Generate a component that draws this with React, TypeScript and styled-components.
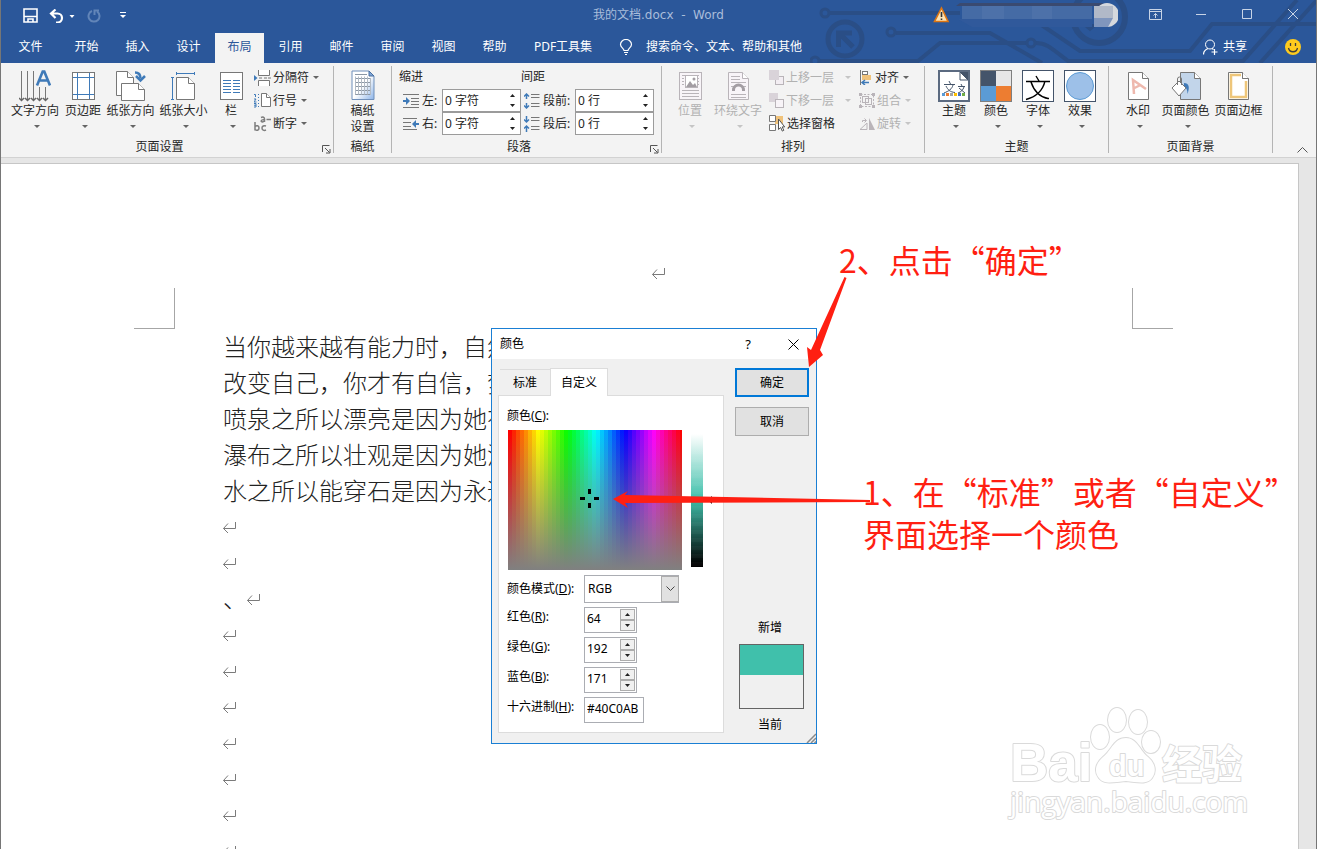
import React from "react";
import styled, { createGlobalStyle, css } from "styled-components";

const ui = `"Noto Sans", "Noto Sans CJK SC", sans-serif`;
const blue = "#2b579a";
const stroke = "#777";
const accent = "#3f7ab8";

const Global = createGlobalStyle`
  * { box-sizing: border-box; }
  body { margin: 0; font: 12px/16px ${ui}; color: #262626; background: #fff; }
  button { font: inherit; color: inherit; background: none; border: 0; padding: 0; cursor: default; }
  input, select { font: inherit; color: inherit; }
  p { margin: 0; }
  svg { display: block; flex: none; }
`;

const Window = styled.div`
  position: relative;
  display: flex;
  flex-direction: column;
  height: 100vh;
  overflow: hidden;
  border: solid #767676;
  border-width: 0 1px;
`;

/* ---------- header ---------- */
const Header = styled.header`
  position: relative;
  background: ${blue};
  color: #fff;
`;
const Circuit = styled.svg`
  position: absolute;
  top: 0;
  right: 0;
`;
const TitleBar = styled.div`
  position: relative;
  display: grid;
  grid-template-columns: 1fr auto 1fr;
  align-items: center;
  height: 33px;
`;
const QuickAccess = styled.div`
  display: flex;
  align-items: center;
  gap: 9px;
  padding: 0 0 2px 20px;
`;
const Title = styled.div`
  color: #a9bdda;
  white-space: pre;
  padding-bottom: 4px;
  font-family: "DejaVu Sans", "Noto Sans CJK SC", sans-serif;
`;
const WindowTools = styled.div`
  display: flex;
  justify-content: flex-end;
  align-items: center;
  padding-bottom: 5px;
`;
const ToolButton = styled.button<{ $w?: number }>`
  display: grid;
  place-items: center;
  width: ${(p) => p.$w ?? 46}px;
  height: 28px;
`;
const Account = styled.svg`
  margin-right: 14px;
`;
const TabRow = styled.nav`
  position: relative;
  display: flex;
  height: 30px;
`;
const RibbonTab = styled.button<{ $active?: boolean; $wide?: number }>`
  width: ${(p) => p.$wide ?? 49}px;
  margin-right: 2px;
  padding-bottom: 3px;
  color: ${(p) => (p.$active ? blue : "#fff")};
  background: ${(p) => (p.$active ? "#f3f3f3" : "transparent")};
  white-space: nowrap;
`;
const TellMe = styled.button`
  display: flex;
  align-items: center;
  gap: 13px;
  margin-left: 12px;
  padding-bottom: 3px;
`;
const Share = styled.button`
  display: flex;
  align-items: center;
  gap: 4px;
  margin: 0 38px 0 auto;
  padding-bottom: 3px;
`;
const Smile = styled.button`
  margin-right: 15px;
  padding-bottom: 2px;
`;

/* ---------- ribbon ---------- */
const Ribbon = styled.div`
  display: flex;
  height: 95px;
  padding: 3px 0 4px;
  background: #f3f3f3;
  border-bottom: 1px solid #d2d2d2;
`;
const Group = styled.section<{ $w: number }>`
  display: flex;
  flex-direction: column;
  width: ${(p) => p.$w}px;
  flex: none;
  border-right: 1px solid #b4b4b4;
`;
const GroupBody = styled.div<{ $pad?: number; $center?: boolean }>`
  display: flex;
  flex: 1;
  padding-left: ${(p) => p.$pad ?? 7}px;
  justify-content: ${(p) => (p.$center ? "center" : "flex-start")};
`;
const GroupFoot = styled.div`
  display: flex;
  gap: 4px;
  height: 16px;
  padding-top: 4px;
  align-items: center;
`;
const GroupName = styled.div`
  flex: 1;
  text-align: center;
`;
const Launcher = styled.button`
  width: 11px;
  padding-top: 5px;
`;
const Big = styled.button<{ $w: number }>`
  display: flex;
  flex-direction: column;
  align-items: center;
  width: ${(p) => p.$w}px;
  padding-top: 2px;
  white-space: nowrap;
  &:disabled { color: #b1b1b1; }
`;
const BigIcon = styled.span`
  display: grid;
  place-items: center;
  height: 35px;
`;
const CaretMark = styled.span<{ $big?: boolean }>`
  width: 0;
  height: 0;
  border: 3px solid transparent;
  border-top-color: currentColor;
  border-bottom: 0;
  opacity: 0.7;
  margin: ${(p) => (p.$big ? "6px 0 0 4px" : "0")};
`;
const SmallColumn = styled.div<{ $w: number; $ml?: number }>`
  display: flex;
  flex-direction: column;
  width: ${(p) => p.$w}px;
  margin-left: ${(p) => p.$ml ?? 0}px;
`;
const Small = styled.button<{ $spread?: boolean }>`
  display: flex;
  align-items: center;
  height: 23px;
  gap: 2px;
  white-space: nowrap;
  & > ${CaretMark} { margin-left: ${(p) => (p.$spread ? 9 : 2)}px; }
  &:disabled { color: #b1b1b1; }
`;
const FieldColumn = styled.div<{ $w: number; $pad: number }>`
  width: ${(p) => p.$w}px;
  & > div { padding-left: ${(p) => p.$pad}px; }
`;
const FieldTitle = styled.p`
  height: 23px;
  line-height: 22px;
`;
const FieldRow = styled.div`
  display: flex;
  align-items: center;
  gap: 3px;
  height: 23px;
`;
const Spin = styled.span`
  display: flex;
  width: 79px;
  height: 23px;
  margin-left: auto;
  background: #fff;
  border: 1px solid #9b9b9b;
`;
const SpinInput = styled.input`
  flex: 1;
  min-width: 0;
  border: 0;
  padding: 0 0 0 2px;
  background: none;
  outline: 0;
`;
const SpinButtons = styled.span`
  display: flex;
  flex-direction: column;
  width: 15px;
`;
const SpinButton = styled.button`
  display: grid;
  place-items: center;
  flex: 1;
`;
const Collapse = styled.button`
  align-self: flex-end;
  margin: 0 8px 0 auto;
`;

/* ---------- document ---------- */
const Canvas = styled.main`
  flex: 1;
  min-height: 0;
  padding: 5px 17px 0 0;
  background: #e6e6e6;
`;
const Page = styled.article`
  height: 100%;
  overflow: hidden;
  background: #fff;
  border: solid #c6c6c6;
  border-width: 1px 1px 0 0;
  padding: 104px 125px 0 133px;
`;
const PageHead = styled.div`
  display: flex;
  justify-content: space-between;
  align-items: flex-end;
  height: 61px;
`;
const HeadMark = styled.div`
  align-self: flex-start;
  margin-left: 10px;
`;
const Corner = styled.div<{ $right?: boolean }>`
  width: 41px;
  height: 41px;
  border-bottom: 1px solid #a6a6a6;
  ${(p) => (p.$right ? css`border-left: 1px solid #a6a6a6;` : css`border-right: 1px solid #a6a6a6;`)}
`;
const Prose = styled.div`
  padding-left: 89px;
  color: #222;
  font: 300 24px/34px "Noto Sans CJK SC", sans-serif;
`;
const Line = styled.p`
  display: flex;
  height: 36px;
  white-space: nowrap;
  & > svg { margin-top: 13px; }
`;

/* ---------- dialog ---------- */
const Dialog = styled.div`
  position: absolute;
  left: 490px;
  top: 328px;
  width: 326px;
  height: 416px;
  display: flex;
  flex-direction: column;
  border: 1px solid #1a7fd4;
  background: #f0f0f0;
  color: #000;
`;
const DialogTitle = styled.div`
  display: flex;
  align-items: center;
  height: 30px;
  padding: 0 17px 0 8px;
  background: #fff;
`;
const DialogTool = styled.button<{ $gap?: number }>`
  margin-left: ${(p) => (p.$gap ? `${p.$gap}px` : "auto")};
  font-size: 13px;
`;
const DialogBody = styled.div`
  display: flex;
  flex: 1;
  padding: 9px 7px 10px 6px;
  gap: 11px;
`;
const Left = styled.div`
  display: flex;
  flex-direction: column;
  width: 226px;
`;
const DialogTabs = styled.div`
  display: flex;
  align-items: flex-end;
  padding-left: 2px;
`;
const DialogTab = styled.button<{ $active?: boolean }>`
  position: relative;
  width: ${(p) => (p.$active ? 58 : 50)}px;
  height: ${(p) => (p.$active ? 28 : 26)}px;
  margin-bottom: ${(p) => (p.$active ? -1 : 0)}px;
  border: 1px solid #dcdcdc;
  border-bottom: 0;
  border-left-width: ${(p) => (p.$active ? 1 : 0)}px;
  border-right-width: ${(p) => (p.$active ? 1 : 0)}px;
  background: ${(p) => (p.$active ? "#fff" : "#f0f0f0")};
`;
const Panel = styled.div`
  flex: 1;
  border: 1px solid #dcdcdc;
  background: #fff;
  padding: 12px 0 0 8px;
`;
const PickerRow = styled.div`
  display: flex;
  gap: 9px;
  margin: 6px 0 5px 1px;
`;
const Field = styled.div`
  position: relative;
  width: 174px;
  height: 140px;
`;
const Luma = styled.div`
  width: 12px;
  height: 137px;
  background: repeating-linear-gradient(transparent 0 4px, rgba(255, 255, 255, 0.03) 4px 8px),
    linear-gradient(#fff 3%, #40c0ab 50%, #000 98%);
`;
const LumaMark = styled.span`
  align-self: center;
  margin-left: -4px;
  border: 4px solid transparent;
  border-left: 0;
  border-right-color: #000;
`;
const FormRow = styled.div<{ $h?: number }>`
  display: flex;
  height: ${(p) => p.$h ?? 30}px;
`;
const FormLabel = styled.label<{ $low?: boolean }>`
  width: 77px;
  line-height: ${(p) => (p.$low ? 28 : 20)}px;
  white-space: nowrap;
`;
const SelectWrap = styled.span`
  display: flex;
  position: relative;
  width: 95px;
  height: 28px;
`;
const Select = styled.select`
  appearance: none;
  width: 100%;
  padding: 0 3px;
  border: 1px solid #abadb3;
  border-radius: 0;
  background: #fff;
`;
const SelectArrow = styled.span`
  position: absolute;
  top: 1px;
  right: 0;
  bottom: 1px;
  width: 18px;
  display: grid;
  place-items: center;
  border: 1px solid #adadad;
  background: #e1e1e1;
  pointer-events: none;
`;
const NumberBox = styled.span<{ $w?: number }>`
  display: flex;
  width: ${(p) => p.$w ?? 53}px;
  height: 26px;
  padding: 1px;
  border: 1px solid #abadb3;
  background: #fff;
  & > input { padding: 0 0 2px 1px; }
`;
const Stepper = styled.span`
  display: flex;
  flex-direction: column;
  width: 15px;
`;
const Step = styled.button`
  flex: 1;
  display: grid;
  place-items: center;
  border: 1px solid #adadad;
  background: #f0f0f0;
`;
const Right = styled.div`
  display: flex;
  flex-direction: column;
  width: 74px;
`;
const Push = styled.button<{ $main?: boolean }>`
  height: 29px;
  margin-bottom: 10px;
  border: ${(p) => (p.$main ? "2px solid #0078d7" : "1px solid #adadad")};
  background: #e1e1e1;
`;
const Preview = styled.div`
  display: flex;
  flex-direction: column;
  align-items: center;
  gap: 8px;
  margin-top: auto;
  padding-right: 4px;
`;
const Swatch = styled.div`
  width: 65px;
  height: 65px;
  margin-left: 3px;
  border: 1px solid #646464;
  background: linear-gradient(#40c0ab 30px, #f0f0f0 30px);
`;
const Grip = styled.svg`
  position: absolute;
  right: 0;
  bottom: 0;
`;

/* ---------- annotations ---------- */
const Note = styled.p<{ $x: number; $y: number }>`
  position: absolute;
  left: ${(p) => p.$x}px;
  top: ${(p) => p.$y}px;
  color: #ff1f12;
  font: 32px/42px "Noto Sans CJK SC", sans-serif;
  white-space: nowrap;
`;
const Arrows = styled.svg`
  position: absolute;
  left: 600px;
  top: 270px;
  pointer-events: none;
`;
const Watermark = styled.svg`
  position: absolute;
  right: 60px;
  bottom: 19px;
`;

/* ---------- drawings ---------- */
type IcoProps = { w: number; h: number; children: React.ReactNode };
const Ico = ({ w, h, children }: IcoProps) => (
  <svg width={w} height={h} viewBox={`0 0 ${w} ${h}`} fill="none" aria-hidden="true">
    {children}
  </svg>
);

const Sheet = ({ x = 0, y = 0, w = 20, h = 28, c = stroke, fill = "#fff", fold = 6 }) => (
  <>
    <path d={`M${x + 0.5} ${y + 0.5}h${w - fold - 1}l${fold} ${fold}v${h - fold - 1}h${-(w - 1)}z`} fill={fill} stroke={c} />
    <path d={`M${x + w - fold - 0.5} ${y + 0.5}v${fold}h${fold}`} fill="#fff" stroke={c} />
  </>
);

const TextDirection = () => (
  <Ico w={32} h={32}>
    <path d="M2.500 1v29M8.500 1v29M14.500 1v29M20.500 17v13M26.500 17v13" stroke={stroke} />
    <path d="M0 28l2.500 2.500L5 28M6 28l2.500 2.500L11 28M12 28l2.500 2.500L17 28M18 28l2.500 2.500L23 28M24 28l2.500 2.500L29 28" stroke="#666" strokeWidth="1.500" />
    <path d="M18 15.500L23.700 1.500h1.600L31 15.500M20 10.500h9" stroke={accent} strokeWidth="2.600" />
  </Ico>
);
const Margins = () => (
  <Ico w={23} h={28}>
    <rect x=".5" y=".5" width="22" height="27" fill="#fff" stroke={stroke} />
    <path d="M5.500 1v26M17.500 1v26M1 5.500h21M1 22.500h21" stroke={accent} />
  </Ico>
);
const Orientation = () => (
  <Ico w={30} h={30}>
    <Sheet w={18} h={25} />
    <Sheet x={5} y={12} w={24} h={18} />
    <path d="M19 1.500c4 0 5.500 2 5.500 6" stroke={accent} strokeWidth="2.500" />
    <path d="M20 5l4.500 4.500L29 5" stroke={accent} strokeWidth="2.500" />
  </Ico>
);
const PaperSize = () => (
  <Ico w={25} h={30}>
    <Sheet x={5} y={6} w={19} h={23} />
    <path d="M5 2.500h19M5.500 1v3M23.500 1v3M1.500 6v22M0 6.500h3M0 28.500h3" stroke={accent} />
  </Ico>
);
const Columns = () => (
  <Ico w={23} h={28}>
    <rect x=".5" y=".5" width="22" height="27" fill="#fff" stroke={stroke} />
    <path d="M3 8.500h8M3 11.500h8M3 14.500h8M3 17.500h8M3 20.500h8M13 8.500h7M13 11.500h7M13 14.500h7M13 17.500h7M13 20.500h7" stroke={accent} />
  </Ico>
);
const Breaks = () => (
  <Ico w={17} h={16}>
    <path d="M4.500 0v5.500h11V0M4.500 16v-5.500h11V16" stroke={stroke} fill="#fff" />
    <path d="M5 8h3M10 8h3M14 8h3" stroke={stroke} />
    <path d="M0 5l3.500 3L0 11z" fill={accent} />
  </Ico>
);
const LineNumbers = () => (
  <Ico w={17} h={15}>
    <path d="M0 1.500h1.500V4M0 6h2l-2 3h2.500M0 10.500h2v3.500H0M0 12.200h2M4.500 1v1M4.500 4v1M4.500 7v1M4.500 10v1M4.500 13v1" stroke={accent} />
    <Sheet x={7} w={10} h={14} fold={4} />
  </Ico>
);
const Hyphen = () => (
  <Ico w={17} h={16}>
    <path d="M1 6v8.500M1 10.500c1.500-1.500 4-1 4 1.500s-2.500 3-4 1.500M12 10c-2-.8-4 0-4 2s2 3 4 2M7 1.500c2-.8 3.500-.5 3.500 1.500v3M10.500 3.700c-4-.5-4 2.300-2 2.300l2-1M12.500 3.500H17" stroke="#7d7d7d" strokeWidth="1.500" />
  </Ico>
);
const Manuscript = () => (
  <Ico w={24} h={31}>
    <defs>
      <linearGradient id="ms" x1="0" y1="0" x2="1" y2="1">
        <stop offset=".5" stopColor="#fff" />
        <stop offset="1" stopColor="#8db4e8" />
      </linearGradient>
    </defs>
    <path d="M1 1h17l5 5v23.500H1z" fill="url(#ms)" stroke="#6f8fba" />
    <path d="M18 1v5h5z" fill="#7ea6d8" stroke="#4a6f9f" />
    <path d="M4 4.500h12M4 8.500h16M4 12.500h16M4 16.500h16M4 20.500h16M4 24.500h16" stroke="#8b97a5" />
    <path d="M4.500 6.500v18M7.500 6.500v18M10.500 6.500v18M13.500 6.500v18M16.500 6.500v18M19.500 8v17" stroke="#b3bbc4" />
  </Ico>
);
const Indent = ({ right }: { right?: boolean }) => (
  <Ico w={16} h={14}>
    {right ? (
      <>
        <path d="M0 1.500h14M0 5.500h8M0 9.500h8M0 12.500h14" stroke={stroke} />
        <path d="M16 7h-5" stroke={accent} strokeWidth="2" />
        <path d="M13 3L9 7l4 4z" fill={accent} />
      </>
    ) : (
      <>
        <path d="M0 .5h16M8 4.500h8M8 7.500h8M8 10.500h8M0 13.500h16" stroke={stroke} />
        <path d="M0 7h4" stroke={accent} strokeWidth="2" />
        <path d="M3 3l4 4-4 4z" fill={accent} />
      </>
    )}
  </Ico>
);
const Spacing = ({ after }: { after?: boolean }) => (
  <Ico w={16} h={16}>
    <path d="M7 1.500h8.500M7 4.500h8.500M7 10.500h8.500M7 13.500h8.500" stroke={stroke} />
    {after ? (
      <path d="M2.500 0v6M0 3.500L2.500 6 5 3.500M2.500 16v-6M0 12.500L2.500 10 5 12.500" stroke={accent} strokeWidth="1.500" />
    ) : (
      <path d="M2.500 1v5M0 3.500L2.500 1 5 3.500M2.500 10v5M0 12.500L2.500 15 5 12.500" stroke={accent} strokeWidth="1.500" />
    )}
  </Ico>
);
const dim = "#b9b4b9";
const Position = () => (
  <Ico w={23} h={28}>
    <rect x=".5" y=".5" width="22" height="27" fill="#f8f4f8" stroke={dim} />
    <path d="M3 3.500h17M3 6.500h2M18 6.500h2M3 9.500h2M18 9.500h2M3 12.500h2M18 12.500h2M3 18.500h17M3 21.500h17M3 24.500h17" stroke={dim} />
    <rect x="6.500" y="3.500" width="12" height="12" fill="#fff" stroke={dim} />
    <path d="M7 15l4-6 3 4 2-2 2 4z" fill="#a39da3" />
    <circle cx="15" cy="7" r="1.500" fill="#a39da3" />
  </Ico>
);
const WrapText = () => (
  <Ico w={21} h={28}>
    <Sheet w={21} h={28} c={dim} fill="#f8f4f8" />
    <path d="M3 4.500h9M3 7.500h9M3 10.500h15M3 22.500h15M3 25.500h15M3 14.500h3M15 14.500h3" stroke={dim} />
    <path d="M5.500 19v-1a5 5 0 0 1 10 0v1" stroke="#a39da3" strokeWidth="3" />
  </Ico>
);
const Layer = ({ down }: { down?: boolean }) => (
  <Ico w={15} h={15}>
    <rect x="6.500" y="6.500" width="8" height="8" fill="#f3eef3" stroke={dim} />
    <rect width={down ? 9 : 10} height={down ? 9 : 10} fill="#d9d3d9" />
    {down && <rect x="6.500" y="6.500" width="8" height="8" fill="#f8f4f8" stroke={dim} />}
  </Ico>
);
const SelectionPane = () => (
  <Ico w={16} h={17}>
    <rect x="6" y="1" width="8" height="8" fill="#f0c27a" />
    <path d="M.5.500h6v6h-6zM.5 9.500h6v6h-6z" fill="#fff" stroke={stroke} />
    <path d="M9.500 4v10.500l2.200-2 1.600 3.600 1.500-.8-1.600-3.400h2.500z" fill="#fff" stroke="#555" />
  </Ico>
);
const Align = () => (
  <Ico w={14} h={15}>
    <path d="M1.500 0v15" stroke={stroke} />
    <rect x="3.500" y="1.500" width="5" height="3" fill="#fff" stroke={stroke} />
    <rect x="3" y="5" width="9" height="5" fill="#f0c27a" />
    <path d="M3 12.500h7M6 10l-3 2.500L6 15" stroke={accent} strokeWidth="1.500" />
  </Ico>
);
const GroupIcon = () => (
  <Ico w={16} h={15}>
    <path d="M1.500 1.500h13v12h-13z" stroke={dim} strokeDasharray="2 1.500" />
    <rect x="3.500" y="3.500" width="6" height="6" stroke={dim} />
    <rect x="6.500" y="5.500" width="6" height="6" stroke={dim} />
    <path d="M0 0h3v3H0zM13 0h3v3h-3zM0 12h3v3H0zM13 12h3v3h-3z" fill={dim} />
  </Ico>
);
const Rotate = () => (
  <Ico w={16} h={12}>
    <path d="M1 11.500h7V5zM3.500 4V2.500H7M5.500.500l2 2-2 2" stroke={dim} />
    <path d="M10 0l6 12h-6z" fill={dim} />
  </Ico>
);
const ThemeIcon = () => (
  <Ico w={32} h={32}>
    <rect x="1" y="1" width="30" height="30" fill="#fff" stroke="#5b6a80" strokeWidth="2" />
    <path d="M22 2h8v8z" fill="#44546a" />
    <path d="M22 2v8h8z" fill="#fff" stroke="#44546a" />
    <path d="M6 14.500h11M11 11l1.500 3M15 15c-1 4-4 6-9 8M8 16c2 4 4 6 9 6.500M20 16.500h7M23 14l1 2M26 17c-1 3-3 5-6 6M21 18l6 5" stroke="#44546a" />
    <path d="M4 23h3v3H4z" fill="#5b9bd5" /><path d="M8 23h3v3H8z" fill="#ed7d31" />
    <path d="M12 23h3v3h-3z" fill="#a5a5a5" /><path d="M16 23h3v3h-3z" fill="#ffc000" />
    <path d="M20 23h3v3h-3z" fill="#4472c4" /><path d="M24 23h3v3h-3z" fill="#70ad47" />
  </Ico>
);
const ColorsIcon = () => (
  <Ico w={32} h={32}>
    <path d="M0 0h16v16H0z" fill="#44546a" /><path d="M16 0h16v16H16z" fill="#e7e6e6" />
    <path d="M0 16h16v16H0z" fill="#5b9bd5" /><path d="M16 16h16v16H16z" fill="#ed7d31" />
    <rect x=".5" y=".5" width="31" height="31" stroke="#7f7f7f" />
  </Ico>
);
const FontsIcon = () => (
  <Ico w={32} h={32}>
    <rect x=".5" y=".5" width="31" height="31" fill="#fff" stroke="#44546a" />
    <path d="M4 11.500h24M14 6l3 5M23 11C21 20 14 27 4 29.500M9 12c3 9 9 15 17 16.500M23 28l4 .5" stroke="#000" strokeWidth="1.400" />
  </Ico>
);
const EffectsIcon = () => (
  <Ico w={32} h={32}>
    <rect x=".5" y=".5" width="31" height="31" fill="#fff" stroke="#44546a" />
    <circle cx="16" cy="16" r="13.500" fill="#9dc0e8" stroke="#5b9bd5" />
  </Ico>
);
const WatermarkIcon = () => (
  <Ico w={21} h={28}>
    <Sheet w={21} h={28} />
    <path d="M6 22L5 8l13 9M5.500 16.500l7-3.500" stroke="#eeb8ad" strokeWidth="2.500" />
  </Ico>
);
const PageColorIcon = () => (
  <Ico w={30} h={28}>
    <Sheet x={9} w={21} h={28} fill="#c2d5ea" />
    <path d="M13 11c5 0 6 4 3.500 11c0-4-1-6-3.500-8z" fill={accent} />
    <path d="M1 16l7-7 7 7-7 8z" fill="#fff" stroke={stroke} />
    <path d="M6.500 13V7a1.500 1.500 0 0 1 4 0v6" stroke={stroke} />
  </Ico>
);
const PageBorderIcon = () => (
  <Ico w={21} h={28}>
    <Sheet w={21} h={28} />
    <path d="M13 3H3v22h15V9" stroke="#eec67a" strokeWidth="2.500" />
    <path d="M14.500.500v6h6" stroke={stroke} fill="#fff" />
  </Ico>
);
const ReturnMark = () => (
  <Ico w={14} h={12}>
    <path d="M12.500 0v6.500H.5M5 1.500L.5 6.500l4.500 4.500" stroke="#7b7b7b" />
  </Ico>
);
const Tri = ({ down }: { down?: boolean }) => (
  <Ico w={5} h={3}>
    <path d={down ? "M0 0h5L2.500 3z" : "M0 3h5L2.500 0z"} fill="#222" />
  </Ico>
);

const bands = Array.from({ length: 44 }, (_, i) => {
  const hue = Math.round((i * 360) / 43);
  return `hsl(${hue} 100% 50%) ${i * 4}px ${i * 4 + 4}px`;
}).join(", ");
const Spectrum = styled(Field)`
  background: linear-gradient(rgba(128, 128, 128, 0), rgb(128, 128, 128)), linear-gradient(to right, ${bands});
`;
const Cross = styled.svg`
  position: absolute;
  left: 72px;
  top: 59px;
`;

const BigButton = ({ w, icon, label, second, caret = true, disabled }: {
  w: number; icon: React.ReactNode; label: string; second?: string; caret?: boolean; disabled?: boolean;
}) => (
  <Big $w={w} disabled={disabled}>
    <BigIcon>{icon}</BigIcon>
    <span>{label}</span>
    {second ? <span>{second}</span> : caret && <CaretMark $big />}
  </Big>
);
const SmallButton = ({ icon, label, caret = true, disabled, spread }: {
  icon: React.ReactNode; label: string; caret?: boolean; disabled?: boolean; spread?: boolean;
}) => (
  <Small disabled={disabled} $spread={spread}>
    {icon}
    <span>{label}</span>
    {caret && <CaretMark />}
  </Small>
);
const RibbonSpin = ({ id, icon, label, value }: { id: string; icon: React.ReactNode; label: string; value: string }) => (
  <FieldRow>
    {icon}
    <label htmlFor={id}>{label}</label>
    <Spin>
      <SpinInput id={id} defaultValue={value} />
      <SpinButtons>
        <SpinButton aria-label="增加"><Tri /></SpinButton>
        <SpinButton aria-label="减少"><Tri down /></SpinButton>
      </SpinButtons>
    </Spin>
  </FieldRow>
);
const Foot = ({ name, launcher }: { name: string; launcher?: boolean }) => (
  <GroupFoot>
    <GroupName>{name}</GroupName>
    {launcher && (
      <Launcher aria-label={`${name}对话框`}>
        <Ico w={9} h={9}>
          <path d="M.5 7V.500h7M3 3l4.500 4.500M8 4v4H4" stroke="#555" />
        </Ico>
      </Launcher>
    )}
  </GroupFoot>
);
const Channel = ({ id, name, hot, value }: { id: string; name: string; hot: string; value: string }) => (
  <FormRow>
    <FormLabel htmlFor={id}>{name}(<u>{hot}</u>):</FormLabel>
    <NumberBox>
      <SpinInput id={id} defaultValue={value} />
      <Stepper>
        <Step aria-label="增加"><Tri /></Step>
        <Step aria-label="减少"><Tri down /></Step>
      </Stepper>
    </NumberBox>
  </FormRow>
);

const lines = [
  "当你越来越有能力时，自然",
  "改变自己，你才有自信，梦",
  "喷泉之所以漂亮是因为她有",
  "瀑布之所以壮观是因为她没",
  "水之所以能穿石是因为永远",
];
const tabs = ["开始", "插入", "设计", "布局", "引用", "邮件", "审阅", "视图", "帮助"];

export default function App() {
  return (
    <Window>
      <Global />
      <Header>
        <Circuit width="506" height="63" viewBox="810 0 506 63" fill="none" stroke="#2a4e86" strokeWidth="4" aria-hidden="true">
          <circle cx="825" cy="13" r="4" strokeWidth="3" />
          <path d="M830 13h130M896 33h94l52 30M820 61h98l22-18h87M1036 43c10 0 14 4 32 18h175l54-61M1260 63l57-63M1040 24l40 27h110l22-27h105" />
          <circle cx="845" cy="39" r="17" strokeWidth="5" />
          <path d="M838.500 47V33H852M840 34l13 13" strokeWidth="5" />
          <circle cx="891" cy="32" r="4" strokeWidth="3" />
          <circle cx="815" cy="61" r="4" strokeWidth="3" />
          <circle cx="1031" cy="43" r="4" strokeWidth="3" />
          <circle cx="1099" cy="17" r="26" strokeWidth="6" />
          <path d="M1084 25h12l-6 5z" strokeWidth="2" fill="#2a4e86" />
        </Circuit>
        <TitleBar>
          <QuickAccess>
            <ToolButton $w={18} aria-label="保存">
              <Ico w={15} h={15}>
                <path d="M1 1h13v13H1zM1 8.500h13M5 14v-3h5v3" stroke="#fff" strokeWidth="1.600" />
              </Ico>
            </ToolButton>
            <ToolButton $w={28} aria-label="撤消">
              <Ico w={26} h={14}>
                <path d="M2 4.500h6.500a4.500 4.500 0 0 1 0 9H7M6.500.500L2 4.500l4.500 4.500" stroke="#fff" strokeWidth="2.200" />
                <path d="M20.500 6h5L23 9z" fill="#fff" />
              </Ico>
            </ToolButton>
            <ToolButton $w={18} aria-label="重复">
              <Ico w={14} h={14}>
                <path d="M5 2a5.500 5.500 0 1 0 5 .5M7.500 6V1.500H12" stroke="#6285b8" strokeWidth="2" />
              </Ico>
            </ToolButton>
            <ToolButton $w={22} aria-label="自定义快速访问工具栏">
              <Ico w={6} h={7}>
                <path d="M0 .500h6" stroke="#fff" />
                <path d="M0 3h6L3 6z" fill="#fff" />
              </Ico>
            </ToolButton>
          </QuickAccess>
          <Title>{"我的文档.docx  -  Word"}</Title>
          <WindowTools>
            <Account width="186" height="26" viewBox="0 0 186 26" aria-hidden="true">
              <path d="M9.500 7L16 20.500H2.500z" fill="#fbe3b5" stroke="#dd7613" strokeWidth="1.600" />
              <path d="M9.500 11v5M9.500 17.500v1.500" stroke="#333" strokeWidth="1.600" />
              <path d="M28 2h142l4 3H24z" fill="#3a4a70" />
              <path d="M30 5h130v13H30z" fill="#456ba5" />
              <path d="M50 5h22v13H50zM100 5h20v13h-20z" fill="#4d71a9" />
              <path d="M26 18h134v8H40z" fill="#30599b" />
              <circle cx="175" cy="14" r="12" fill="#d5d8dd" />
              <path d="M162 5h19v12h-19z" fill="#b1b9c8" />
              <path d="M162 17h19l-5 9h-14z" fill="#8096bd" />
            </Account>
            <ToolButton aria-label="功能区显示选项">
              <Ico w={13} h={11}>
                <path d="M.5.500h12v10H.5zM0 2.500h13M6.500 9V4.500M4.500 6.500l2-2 2 2" stroke="#c8d4e6" />
              </Ico>
            </ToolButton>
            <ToolButton aria-label="最小化">
              <Ico w={10} h={10}><path d="M0 5.500h10" stroke="#c8d4e6" /></Ico>
            </ToolButton>
            <ToolButton aria-label="最大化">
              <Ico w={10} h={10}><path d="M.5.500h9v9h-9z" stroke="#c8d4e6" /></Ico>
            </ToolButton>
            <ToolButton aria-label="关闭">
              <Ico w={10} h={10}><path d="M0 0l10 10M10 0L0 10" stroke="#c8d4e6" /></Ico>
            </ToolButton>
          </WindowTools>
        </TitleBar>
        <TabRow>
          <RibbonTab $wide={59}>文件</RibbonTab>
          {tabs.map((t) => (
            <RibbonTab key={t} $active={t === "布局"}>{t}</RibbonTab>
          ))}
          <RibbonTab $wide={84}>PDF工具集</RibbonTab>
          <TellMe>
            <Ico w={14} h={16}>
              <path d="M5 11.500c0-2-3.500-3-3.500-6a5.500 5 0 0 1 11 0c0 3-3.500 4-3.500 6zM5 13.500h4M6 15.500h2" stroke="#fff" strokeWidth="1.200" />
            </Ico>
            搜索命令、文本、帮助和其他
          </TellMe>
          <Share>
            <Ico w={16} h={16}>
              <circle cx="7" cy="5.500" r="4.500" stroke="#fff" />
              <path d="M.5 15.500c0-3 2-5 4.500-6M9 9.500l1.500 1M11.500 10v6M8.500 13h6" stroke="#fff" strokeWidth="1.200" />
            </Ico>
            共享
          </Share>
          <Smile aria-label="反馈">
            <Ico w={16} h={16}>
              <circle cx="8" cy="8" r="8" fill="#fecb1e" />
              <path d="M3.500 9c1 5 8 5 9 0M5.500 4v3M10.500 4v3" stroke="#3d3d3d" strokeWidth="1.300" />
            </Ico>
          </Smile>
        </TabRow>
      </Header>

      <Ribbon>
        <Group $w={333}>
          <GroupBody>
            <BigButton w={54} icon={<TextDirection />} label="文字方向" />
            <BigButton w={42} icon={<Margins />} label="页边距" />
            <BigButton w={53} icon={<Orientation />} label="纸张方向" />
            <BigButton w={53} icon={<PaperSize />} label="纸张大小" />
            <BigButton w={42} icon={<Columns />} label="栏" />
            <SmallColumn $w={76} $ml={2}>
              <SmallButton icon={<Breaks />} label="分隔符" />
              <SmallButton icon={<LineNumbers />} label="行号" />
              <SmallButton icon={<Hyphen />} label="断字" />
            </SmallColumn>
          </GroupBody>
          <Foot name="页面设置" launcher />
        </Group>
        <Group $w={58}>
          <GroupBody $center $pad={0}>
            <BigButton w={42} icon={<Manuscript />} label="稿纸" second="设置" />
          </GroupBody>
          <Foot name="稿纸" />
        </Group>
        <Group $w={270}>
          <GroupBody>
            <FieldColumn $w={122} $pad={4}>
              <FieldTitle>缩进</FieldTitle>
              <RibbonSpin id="indent-left" icon={<Indent />} label="左:" value="0 字符" />
              <RibbonSpin id="indent-right" icon={<Indent right />} label="右:" value="0 字符" />
            </FieldColumn>
            <FieldColumn $w={133} $pad={3}>
              <FieldTitle>间距</FieldTitle>
              <RibbonSpin id="space-before" icon={<Spacing />} label="段前:" value="0 行" />
              <RibbonSpin id="space-after" icon={<Spacing after />} label="段后:" value="0 行" />
            </FieldColumn>
          </GroupBody>
          <Foot name="段落" launcher />
        </Group>
        <Group $w={263}>
          <GroupBody>
            <BigButton w={42} icon={<Position />} label="位置" disabled />
            <BigButton w={54} icon={<WrapText />} label="环绕文字" disabled />
            <SmallColumn $w={90} $ml={4}>
              <SmallButton icon={<Layer />} label="上移一层" disabled spread />
              <SmallButton icon={<Layer down />} label="下移一层" disabled spread />
              <SmallButton icon={<SelectionPane />} label="选择窗格" caret={false} />
            </SmallColumn>
            <SmallColumn $w={56}>
              <SmallButton icon={<Align />} label="对齐" />
              <SmallButton icon={<GroupIcon />} label="组合" disabled />
              <SmallButton icon={<Rotate />} label="旋转" disabled />
            </SmallColumn>
          </GroupBody>
          <Foot name="排列" />
        </Group>
        <Group $w={184}>
          <GroupBody $pad={8}>
            <BigButton w={42} icon={<ThemeIcon />} label="主题" />
            <BigButton w={42} icon={<ColorsIcon />} label="颜色" />
            <BigButton w={42} icon={<FontsIcon />} label="字体" />
            <BigButton w={42} icon={<EffectsIcon />} label="效果" />
          </GroupBody>
          <Foot name="主题" />
        </Group>
        <Group $w={164}>
          <GroupBody $pad={8}>
            <BigButton w={42} icon={<WatermarkIcon />} label="水印" />
            <BigButton w={53} icon={<PageColorIcon />} label="页面颜色" />
            <BigButton w={53} icon={<PageBorderIcon />} label="页面边框" caret={false} />
          </GroupBody>
          <Foot name="页面背景" />
        </Group>
        <Collapse aria-label="折叠功能区">
          <Ico w={11} h={6}><path d="M.5 5.500l5-5 5 5" stroke="#555" /></Ico>
        </Collapse>
      </Ribbon>

      <Canvas>
        <Page>
          <PageHead>
            <Corner />
            <HeadMark><ReturnMark /></HeadMark>
            <Corner $right />
          </PageHead>
          <Prose>
            {lines.map((l) => <Line key={l}>{l}</Line>)}
            <Line><ReturnMark /></Line>
            <Line><ReturnMark /></Line>
            <Line>、<ReturnMark /></Line>
            {Array.from({ length: 7 }, (_, i) => <Line key={i}><ReturnMark /></Line>)}
          </Prose>
        </Page>
      </Canvas>

      <Dialog role="dialog" aria-label="颜色">
        <DialogTitle>
          <span>颜色</span>
          <DialogTool aria-label="帮助">?</DialogTool>
          <DialogTool $gap={37} aria-label="关闭">
            <Ico w={11} h={11}><path d="M.5.500l10 10M10.500.500l-10 10" stroke="#000" /></Ico>
          </DialogTool>
        </DialogTitle>
        <DialogBody>
          <Left>
            <DialogTabs>
              <DialogTab>标准</DialogTab>
              <DialogTab $active>自定义</DialogTab>
            </DialogTabs>
            <Panel>
              <p>颜色(<u>C</u>):</p>
              <PickerRow>
                <Spectrum>
                  <Cross width="19" height="19" aria-hidden="true">
                    <path d="M8 0h3v5H8zM8 14h3v5H8zM0 8h5v3H0zM14 8h5v3h-5z" fill="#000" />
                  </Cross>
                </Spectrum>
                <Luma />
                <LumaMark />
              </PickerRow>
              <FormRow $h={32}>
                <FormLabel htmlFor="mode" $low>颜色模式(<u>D</u>):</FormLabel>
                <SelectWrap>
                  <Select id="mode" defaultValue="RGB"><option>RGB</option></Select>
                  <SelectArrow>
                    <Ico w={9} h={6}><path d="M.5.500l4 4 4-4" stroke="#444" /></Ico>
                  </SelectArrow>
                </SelectWrap>
              </FormRow>
              <Channel id="red" name="红色" hot="R" value="64" />
              <Channel id="green" name="绿色" hot="G" value="192" />
              <Channel id="blue" name="蓝色" hot="B" value="171" />
              <FormRow $h={26}>
                <FormLabel htmlFor="hex">十六进制(<u>H</u>):</FormLabel>
                <NumberBox $w={60}><SpinInput id="hex" defaultValue="#40C0AB" /></NumberBox>
              </FormRow>
            </Panel>
          </Left>
          <Right>
            <Push $main>确定</Push>
            <Push>取消</Push>
            <Preview>
              <span>新增</span>
              <Swatch />
              <span>当前</span>
            </Preview>
          </Right>
        </DialogBody>
        <Grip width="10" height="10" aria-hidden="true">
          <path d="M1 10l9-9M5 10l5-5M8.500 10L10 8.500" stroke="#8a8a8a" strokeWidth="1.500" />
        </Grip>
      </Dialog>

      <Arrows width="275" height="240" viewBox="601 270 275 240" fill="#ff1f12" aria-hidden="true">
        <path d="M844.500 277l2 1L820 350l3 5-14 12-2-20 4 3z" />
        <path d="M613 499l15-8-3 4 245 5v2l-245 1 3 5z" />
      </Arrows>
      <Note $x={838} $y={238}>2、点击“确定”</Note>
      <Note $x={862} $y={470}>1、在“标准”或者“自定义”<br />界面选择一个颜色</Note>

      <Watermark width="250" height="125" viewBox="1006 705 250 125" aria-hidden="true">
        <g fill="#fff" stroke="#dadada" strokeWidth="2" strokeLinejoin="round" paintOrder="stroke">
          <text x="1010" y="781" fontFamily="Liberation Sans" fontWeight="700" fontSize="53">Bai</text>
          <ellipse cx="1100" cy="737" rx="9" ry="12" />
          <ellipse cx="1117" cy="720" rx="9" ry="12" />
          <ellipse cx="1138" cy="722" rx="9" ry="12" />
          <ellipse cx="1151" cy="742" rx="9" ry="11" />
          <path d="M1126 738c-12 0-14 12-23 19-8 7-9 15-4 21 5 7 15 4 27 3 11 1 21 4 26-3s3-15-4-21c-8-6-11-19-22-19z" />
          <text x="1109" y="776" fontFamily="Liberation Sans" fontWeight="700" fontSize="29">du</text>
          <text x="1162" y="779" fontFamily="Noto Sans CJK SC" fontWeight="700" fontSize="40">经验</text>
          <text x="1010" y="812" fontFamily="Open Sans" fontSize="28">jingyan.baidu.com</text>
        </g>
      </Watermark>
    </Window>
  );
}
